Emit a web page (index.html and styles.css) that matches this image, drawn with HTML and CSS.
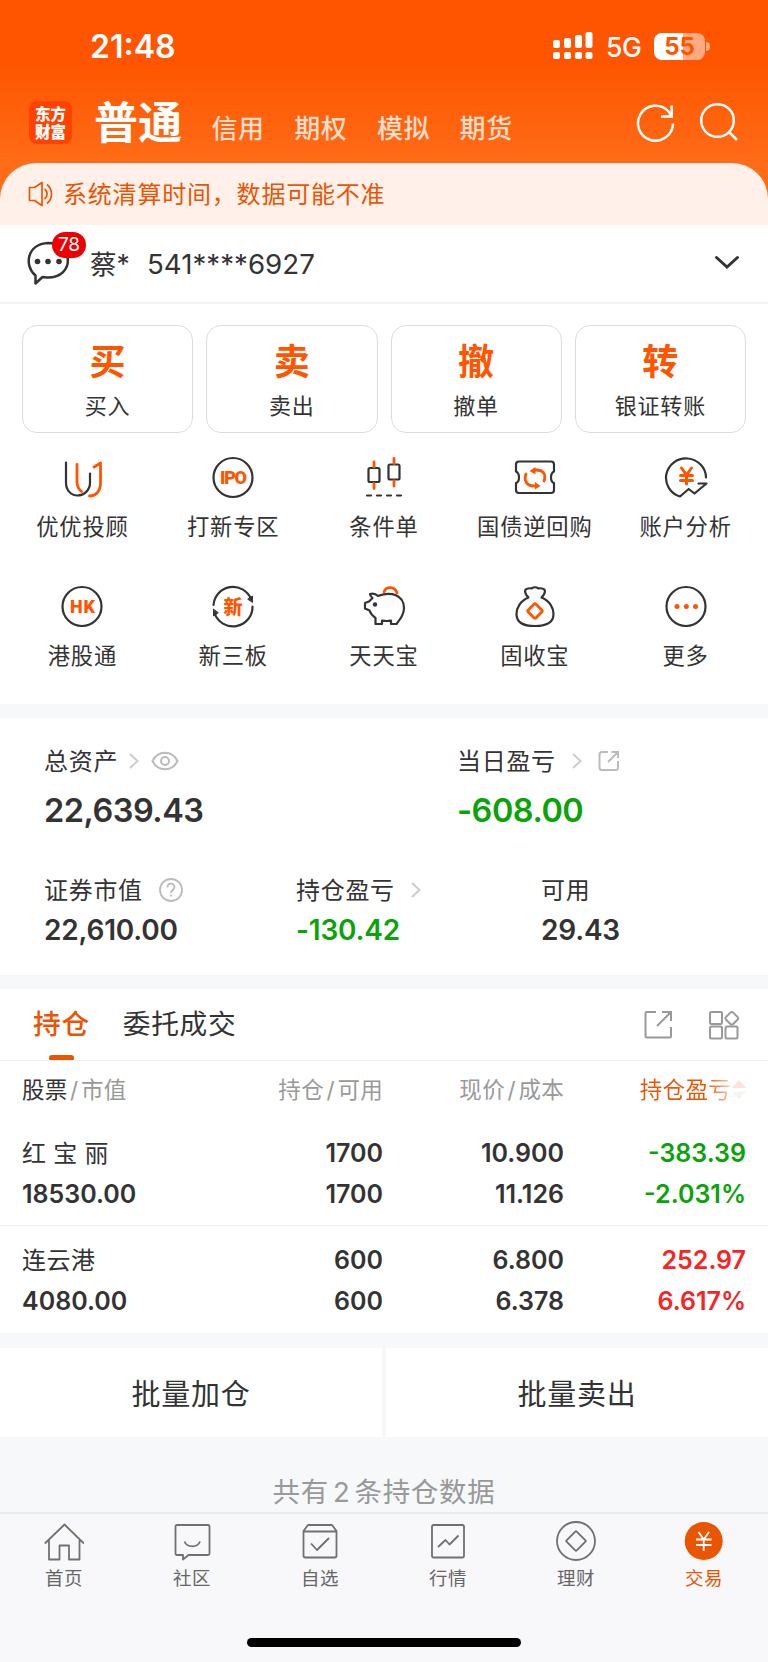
FILE: index.html
```html
<!DOCTYPE html>
<html lang="zh-CN">

<head>
    <meta charset="utf-8">
    <title>交易</title>
    <meta name="viewport" content="width=device-width, initial-scale=1.0">
    <link rel="stylesheet" href="styles.css">
</head>

<body>
    <header class="header">
        <div class="status-bar">
            <span class="time">21:48</span>
            <svg class="signal" width="40" height="28" viewBox="0 0 40 28" fill="#fff">
                <rect x="0" y="8" width="7" height="8" rx="2"/><rect x="11" y="6" width="7" height="10" rx="2"/>
                <rect x="22" y="3" width="7" height="13" rx="2"/><rect x="32.500" y="0" width="7" height="16" rx="2"/>
                <rect x="0" y="20" width="7" height="7" rx="2"/><rect x="11" y="20" width="7" height="7" rx="2"/>
                <rect x="22" y="20" width="7" height="7" rx="2"/><rect x="32.500" y="20" width="7" height="7" rx="2"/>
            </svg>
            <span class="network">5G</span>
            <div class="battery">55</div>
            <i class="battery-cap"></i>
        </div>
        <nav class="top-nav">
            <div class="logo"><span>东方</span><span>财富</span></div>
            <span class="mode active">普通</span>
            <span class="mode">信用</span>
            <span class="mode">期权</span>
            <span class="mode">模拟</span>
            <span class="mode">期货</span>
            <svg class="refresh" width="40" height="40" viewBox="0 0 40 40" fill="none" stroke="#fff" stroke-width="2.500">
                <path d="M37 20.500A17.500 17.500 0 1 1 32.500 8.500L35 12"/><path d="M35.700 2.500V13.500H25"/>
            </svg>
            <svg class="search" width="40" height="40" viewBox="0 0 40 40" fill="none" stroke="#fff" stroke-width="2.500">
                <circle cx="18.500" cy="17.500" r="16.300"/><path d="M30 29L38 37"/>
            </svg>
        </nav>
    </header>

    <div class="notice-wrap">
        <div class="notice">
            <svg width="26" height="26" viewBox="0 0 26 26" fill="none" stroke="#ea5504" stroke-width="1.700" stroke-linejoin="round">
                <path d="M1.500 6.500H6.500L14 1.500V24.500L6.500 19.500H1.500Z"/><path d="M16.500 8c3.500 2.500 3.500 7.500 0 10M19 3.500c6 5 6 14 0 19"/>
            </svg>
            <span>系统清算时间，数据可能不准</span>
        </div>
    </div>

    <div class="account">
        <div class="chat">
            <svg width="46" height="46" viewBox="0 0 46 46" fill="none" stroke="#333" stroke-width="2.500" stroke-linejoin="round">
                <path d="M9.500 43.500V35.500C-2 26 .500 4 22 3C48 3 49 37.500 22 37.500C19 37.500 18 37 16.500 37Z"/>
                <g fill="#333" stroke="none"><circle cx="11.500" cy="21.500" r="2.800"/><circle cx="22" cy="21.500" r="2.800"/><circle cx="33" cy="21.500" r="2.800"/></g>
            </svg>
            <b class="badge">78</b>
        </div>
        <span class="user">蔡*</span>
        <span class="number">541****6927</span>
        <svg class="arrow" width="26" height="16" viewBox="0 0 26 16" fill="none" stroke="#333" stroke-width="3" stroke-linecap="round"><path d="M2.500 2.500L13 12L23.500 2.500"/></svg>
    </div>

    <section class="trade">
        <div class="cards">
            <div class="card"><b>买</b><span>买入</span></div>
            <div class="card"><b>卖</b><span>卖出</span></div>
            <div class="card"><b>撤</b><span>撤单</span></div>
            <div class="card"><b>转</b><span>银证转账</span></div>
        </div>
        <div class="tools">
            <div class="tool">
                <svg viewBox="0 0 44 44">
                    <path d="M6 7.500V28C6 35 11 40.500 17.500 40.500S30 35 30 28V18.500"/>
                    <path class="o" d="M17 9.500V27C17 31 18.500 34 21.500 36.500M34 12L40.500 8V28C40.500 36 36 41 29.500 41"/>
                </svg>
                <span>优优投顾</span>
            </div>
            <div class="tool">
                <svg viewBox="0 0 44 44"><circle cx="22" cy="22.500" r="19.500"/><text x="22.500" y="29" font-size="18" textLength="27">IPO</text></svg>
                <span>打新专区</span>
            </div>
            <div class="tool">
                <svg viewBox="0 0 44 44">
                    <rect x="6.500" y="13" width="11" height="14" rx="1.500"/><rect x="26.500" y="9.500" width="11" height="15" rx="1.500"/>
                    <path d="M5 40.500h4M15 40.500h4M25 40.500h4M35 40.500h4"/>
                    <path class="o" d="M12 7v5M12 28.500v5M32 3.500v5M32 26v5"/>
                </svg>
                <span>条件单</span>
            </div>
            <div class="tool">
                <svg viewBox="0 0 44 44">
                    <path d="M6 6.500H38Q41 6.500 41 9.500V16.500C37 18.500 37 26.500 41 28V35Q41 38 38 38H6Q3 38 3 35V28C7 26.500 7 18.500 3 16.500V9.500Q3 6.500 6 6.500Z"/>
                    <path class="o" d="M13 19C10.500 26 14 31 21 31H23M31 26C33.500 19 30 15 23 15H21"/>
                    <path class="f" d="M16.500 16L22.500 12V19.500ZM27.500 31L22 27V34.500Z"/>
                </svg>
                <span>国债逆回购</span>
            </div>
            <div class="tool">
                <svg viewBox="0 0 44 44">
                    <path d="M42 22.500A20 19.500 0 1 0 16 41.500L24.700 34L30.500 38.500L42.500 28.500H34.500"/>
                    <path class="o y" d="M17.500 13L22.500 20L27.500 13M16.500 20.500H28.500M16.500 25.500H28.500M22.500 20V29"/>
                </svg>
                <span>账户分析</span>
            </div>
            <div class="tool">
                <svg viewBox="0 0 44 44"><circle cx="22" cy="22.500" r="19.500"/><text x="22.500" y="29" font-size="18" textLength="25">HK</text></svg>
                <span>港股通</span>
            </div>
            <div class="tool">
                <svg viewBox="0 0 44 44">
                    <path d="M2.500 21A19.500 19.500 0 0 1 40 15M41.500 22.500A19.500 19.500 0 0 1 3.500 29"/>
                    <path fill="#333" stroke-width="1" d="M37 15L41.500 12V18ZM2.500 25.500V32L7 29Z"/>
                    <text class="cn" x="22" y="29.500" font-size="19">新</text>
                </svg>
                <span>新三板</span>
            </div>
            <div class="tool">
                <svg viewBox="0 0 44 44">
                    <path d="M8 10C11 9 14 10 16 12C29 7 42 11 42 24C42 30 39 34 34.500 40H29V36.500Q25 37.500 20 36.500V40H13.500V34Q9 31 7.500 26.500L3 24.500V19L7 17.500L10.500 14Q8 12 8 10Z"/>
                    <circle cx="13" cy="20.500" r="2.200" fill="#333" stroke="none"/>
                    <path class="o" d="M22 8C24 2 33 2 35 9"/>
                </svg>
                <span>天天宝</span>
            </div>
            <div class="tool">
                <svg viewBox="0 0 44 44">
                    <path d="M15.500 13.500C11 9 11 5 15 4.500Q17 4 18.500 4.500Q22 2 25.500 4.500Q27 4 29 4.500C33 5 33 9 28.500 13.500C37 17 40.500 24 40.500 30C40.500 38 35 42 22 42S3.500 38 3.500 30C3.500 24 7 17 15.500 13.500Z"/>
                    <rect class="o" x="16.500" y="21.500" width="11" height="11" rx="1.500" transform="rotate(45 22 27)"/>
                </svg>
                <span>固收宝</span>
            </div>
            <div class="tool">
                <svg viewBox="0 0 44 44"><circle cx="22" cy="22.500" r="19.500"/><g class="f"><circle cx="13" cy="22.500" r="2.500"/><circle cx="22.300" cy="22.500" r="2.500"/><circle cx="31.500" cy="22.500" r="2.500"/></g></svg>
                <span>更多</span>
            </div>
        </div>
    </section>

    <section class="assets">
        <div class="total">
            <div class="asset">
                <div class="label"><span>总资产</span>
                    <svg class="chev" width="10" height="16" viewBox="0 0 10 16"><path d="M1 1L8.500 8L1 15"/></svg>
                    <svg class="eye" width="28" height="20" viewBox="0 0 28 20"><path d="M1.500 10C7 -1 21 -1 26.500 10C21 21 7 21 1.500 10Z"/><circle cx="14" cy="10" r="4"/></svg>
                </div>
                <div class="value">22,639.43</div>
            </div>
            <div class="asset">
                <div class="label"><span>当日盈亏</span>
                    <svg class="chev wide" width="10" height="16" viewBox="0 0 10 16"><path d="M1 1L8.500 8L1 15"/></svg>
                    <svg class="share" width="22" height="22" viewBox="0 0 22 22"><path d="M10 2H4Q1.500 2 1.500 4.500V17.500Q1.500 20 4 20H17.500Q20 20 20 17.500V11M13.500 2H20V8M20 2L10 12"/></svg>
                </div>
                <div class="value green">-608.00</div>
            </div>
        </div>
        <div class="detail">
            <div class="asset">
                <div class="label"><span>证券市值</span>
                    <svg class="help" width="24" height="24" viewBox="0 0 24 24"><circle cx="12" cy="12" r="11"/><path d="M8.500 9.500C8.500 4.500 15.500 4.500 15.500 9C15.500 12 12 12 12 15M12 16.500V18.500"/></svg>
                </div>
                <div class="value">22,610.00</div>
            </div>
            <div class="asset">
                <div class="label"><span>持仓盈亏</span>
                    <svg class="chev wide" width="10" height="16" viewBox="0 0 10 16"><path d="M1 1L8.500 8L1 15"/></svg>
                </div>
                <div class="value green">-130.42</div>
            </div>
            <div class="asset">
                <div class="label"><span>可用</span></div>
                <div class="value">29.43</div>
            </div>
        </div>
    </section>

    <section class="holdings">
        <div class="tabs">
            <span class="tab active">持仓</span>
            <span class="tab">委托成交</span>
            <svg class="export" width="30" height="30" viewBox="0 0 30 30"><path d="M12 2H2.500Q1.500 2 1.500 3V26.500Q1.500 27.500 2.500 27.500H26Q27 27.500 27 26.500V17M18 2H27V11M27 2L13 16"/></svg>
            <svg class="layout" width="32" height="30" viewBox="0 0 32 30"><rect x="2" y="2" width="12" height="12" rx="1.500"/><rect x="2" y="16.500" width="12" height="12" rx="1.500"/><rect x="17.500" y="16.500" width="12" height="12" rx="1.500"/><rect x="18.800" y="3.300" width="10" height="10" rx="2" transform="rotate(45 23.800 8.300)"/></svg>
        </div>
        <div class="row head">
            <span><em>股票</em><i>/</i>市值</span>
            <span>持仓<i>/</i>可用</span>
            <span>现价<i>/</i>成本</span>
            <span class="sort">持仓盈亏<svg width="14" height="20" viewBox="0 0 14 20"><path fill="#fde3d6" d="M7 0L14 8H0Z"/><path fill="#f5f5f6" d="M0 11.500H14L7 19.500Z"/></svg></span>
        </div>
        <div class="row">
            <div><span class="name spaced">红 宝 丽</span><span>18530.00</span></div>
            <div><span>1700</span><span>1700</span></div>
            <div><span>10.900</span><span>11.126</span></div>
            <div class="green"><span>-383.39</span><span>-2.031%</span></div>
        </div>
        <div class="row">
            <div><span class="name">连云港</span><span>4080.00</span></div>
            <div><span>600</span><span>600</span></div>
            <div><span>6.800</span><span>6.378</span></div>
            <div class="red"><span>252.97</span><span>6.617%</span></div>
        </div>
    </section>

    <div class="batch">
        <div>批量加仓</div>
        <div>批量卖出</div>
    </div>
    <div class="count">共有<i>2</i>条持仓数据</div>

    <footer class="tabbar">
        <div class="items">
            <div class="item">
                <svg viewBox="0 0 40 40"><path d="M.800 22.500L20.500 3.500L40 22.500M5 19V38.500H15.500V24.500H25V38.500H35.500V19"/></svg>
                <span>首页</span>
            </div>
            <div class="item">
                <svg viewBox="0 0 40 40"><path d="M5 4H36Q37.500 4 37.500 5.500V32.500Q37.500 34 36 34H16.500L11 38.500V34H5Q3.500 34 3.500 32.500V5.500Q3.500 4 5 4ZM12.500 20.500C15 27 25.500 27 28 20.500"/></svg>
                <span>社区</span>
            </div>
            <div class="item">
                <svg viewBox="0 0 40 40"><path d="M8 4H32L36.500 10V34.500Q36.500 36.500 34.500 36.500H5.500Q3.500 36.500 3.500 34.500V10ZM3.500 10.500H36.500M11 22.500L17 29L29 17"/></svg>
                <span>自选</span>
            </div>
            <div class="item">
                <svg viewBox="0 0 40 40"><rect x="4" y="4" width="32" height="32.500" rx="1.500"/><path d="M10 26L17.500 19L21.500 23.500L30.500 14.500"/></svg>
                <span>行情</span>
            </div>
            <div class="item">
                <svg viewBox="0 0 40 40"><circle cx="20" cy="20" r="19"/><rect x="12.800" y="12.800" width="14.400" height="14.400" rx="1" transform="rotate(45 20 20)"/></svg>
                <span>理财</span>
            </div>
            <div class="item active">
                <svg viewBox="0 0 40 40"><circle cx="19.700" cy="20" r="19" fill="#ea5504" stroke="none"/><path stroke="#fff" d="M14.500 11L19.700 18.500L25 11M12 18.500H27.500M12 24H27.500M19.700 18.500V30"/></svg>
                <span>交易</span>
            </div>
        </div>
        <div class="home-bar"></div>
    </footer>
</body>

</html>
```

FILE: styles.css
```css
* {
    box-sizing: border-box;
}

body {
    margin: 0;
    width: 768px;
    height: 1662px;
    overflow: hidden;
    background: #f6f8fa;
    color: #333;
    font-family: Inter, "Noto Sans CJK SC", sans-serif;
}

svg {
    display: block;
    flex: none;
}

i, em {
    font-style: normal;
}

.green {
    color: #0aa30a;
}
.red {
    color: #f82323;
}

/* header */
.header {
    height: 163px;
    background: linear-gradient(#ff5500 0, #ff5500 65px, #ff6c17 163px);
    color: #fff;
}
.status-bar {
    display: flex;
    align-items: center;
    height: 92px;
    padding-left: 90px;
}
.time {
    width: 463px;
    font-size: 32px;
    font-weight: 600;
}
.network {
    width: 48px;
    margin-left: 13px;
    padding-top: 2px;
    font-size: 26.500px;
    font-weight: 500;
    letter-spacing: -0.5px;
}
.battery {
    width: 51px;
    height: 27px;
    border-radius: 8px;
    background: linear-gradient(90deg, #fff 56%, #ffaa80 56%);
    color: #ff5500;
    font-size: 24px;
    font-weight: 700;
    line-height: 27px;
    text-align: center;
}
.battery-cap {
    width: 4px;
    height: 9px;
    margin-left: 1px;
    border-radius: 0 4px 4px 0;
    background: #ffaa80;
}

.top-nav {
    display: flex;
    align-items: center;
    height: 61px;
    padding-left: 29px;
}
.logo {
    width: 43px;
    height: 43px;
    padding-top: 3px;
    border-radius: 8px;
    background: #ff4200;
    font-family: "Noto Sans CJK SC", sans-serif;
    font-size: 15.500px;
    font-weight: 900;
    line-height: 18px;
    text-align: center;
}
.logo span {
    display: block;
}
.mode {
    margin: 13px 0 0 29.500px;
    color: #ffddcb;
    font-size: 26px;
    font-weight: 500;
    line-height: 30px;
    letter-spacing: 0.6px;
}
.mode.active {
    margin: 0 0 0 22px;
    color: #fff;
    font-size: 44px;
    font-weight: 700;
    letter-spacing: 0;
}
.refresh {
    margin-left: 123px;
}
.search {
    margin-left: 23px;
}

/* notice */
.notice-wrap {
    height: 62px;
    background: #ff6c17;
}
.notice {
    display: flex;
    align-items: center;
    height: 62px;
    padding-left: 28px;
    border-radius: 36px 36px 0 0;
    background: #fff1ea;
    color: #ea5504;
    font-size: 24px;
    letter-spacing: 0.8px;
}
.notice span {
    margin-left: 9px;
    padding-bottom: 3px;
}

/* account */
.account {
    display: flex;
    align-items: center;
    height: 79px;
    padding: 0 28px 2px 26px;
    border-bottom: 2px solid #f2f2f3;
    background: #fff;
    font-size: 27.700px;
}
.chat {
    position: relative;
    width: 64px;
}
.badge {
    position: absolute;
    top: -8px;
    left: 26px;
    width: 34px;
    height: 26px;
    border-radius: 13px;
    background: #ee0000;
    color: #fff;
    font-size: 19px;
    font-weight: 400;
    line-height: 26px;
    text-align: center;
}
.user {
    width: 57px;
    font-size: 26.500px;
}
.number {
    padding-top: 3px;
}
.arrow {
    margin-left: auto;
}

/* trade */
.trade {
    height: 400px;
    padding-top: 21px;
    background: #fff;
}
.cards {
    display: flex;
    gap: 13px;
    padding: 0 22px;
}
.card {
    flex: 1;
    height: 108px;
    padding-top: 15px;
    border: 1px solid #dcdcdc;
    border-radius: 15px;
    text-align: center;
}
.card b {
    display: block;
    color: #ff5500;
    font-size: 36px;
    font-weight: 700;
    line-height: 42px;
}
.card span {
    display: block;
    margin-top: 6px;
    font-size: 22px;
    line-height: 34px;
    letter-spacing: 0.8px;
}
.tools {
    display: grid;
    grid-template-columns: repeat(5, 1fr);
    row-gap: 42px;
    padding: 22px 7px 0;
}
.tool {
    display: flex;
    flex-direction: column;
    align-items: center;
}
.tool svg {
    width: 44px;
    height: 44px;
    margin-bottom: 13px;
    fill: none;
    stroke: #333;
    stroke-width: 2.2;
    stroke-linecap: round;
    stroke-linejoin: round;
}
.tool .o {
    stroke: #ff5500;
    stroke-width: 2.8;
}
.tool .y {
    stroke-width: 3;
}
.tool .f {
    fill: #ff5500;
    stroke: none;
}
.tool text {
    fill: #ff5500;
    stroke: none;
    font-family: Roboto, sans-serif;
    font-weight: 900;
    text-anchor: middle;
}
.tool .cn {
    font-family: "Noto Sans CJK SC", sans-serif;
}
.tool span {
    font-size: 22.300px;
    line-height: 30px;
    letter-spacing: 0.8px;
}

/* assets */
.assets {
    height: 257px;
    margin-top: 14px;
    padding: 25px 44px 0;
    background: #fff;
}
.total, .detail {
    display: grid;
    grid-template-columns: 413px 1fr;
}
.detail {
    grid-template-columns: 252px 245px 1fr;
    margin-top: 40px;
}
.label {
    display: flex;
    align-items: center;
    height: 36px;
    font-size: 24px;
    letter-spacing: 0.7px;
}
.label span {
    padding-bottom: 3px;
}
.label svg {
    fill: none;
    stroke: #bbb;
    stroke-width: 2;
}
.label .chev {
    margin-left: 11px;
    stroke: #ccc;
}
.label .wide {
    margin-left: 16px;
}
.label .eye {
    margin-left: 12px;
}
.label .share {
    margin-left: 16px;
}
.label .help {
    margin-left: 16px;
    stroke-width: 1.8;
}
.value {
    margin-top: 11px;
    font-size: 32.500px;
    font-weight: 600;
    line-height: 42px;
    letter-spacing: -0.5px;
}
.detail .value {
    margin-top: 4px;
    font-size: 28px;
    line-height: 36px;
    letter-spacing: -0.2px;
}

/* holdings */
.holdings {
    height: 344px;
    margin-top: 14px;
    background: #fff;
}
.tabs {
    display: flex;
    align-items: center;
    height: 72px;
    padding: 0 28px 0 33px;
    border-bottom: 1px solid #f1f1f2;
    font-size: 27.700px;
    letter-spacing: 0.7px;
}
.tabs svg {
    fill: none;
    stroke: #999;
    stroke-width: 2;
}
.tab {
    position: relative;
    margin-right: 33px;
    line-height: 71px;
}
.tab.active {
    color: #ea5504;
    font-weight: 500;
}
.tab.active::after {
    content: "";
    position: absolute;
    left: 16px;
    bottom: 0;
    width: 25px;
    height: 5px;
    border-radius: 3px 3px 1px 1px;
    background: #ea5504;
}
.export {
    margin-left: auto;
}
.layout {
    margin-left: 34px;
}
.row {
    display: grid;
    grid-template-columns: 160px 201px 181px 182px;
    height: 107px;
    padding: 15px 22px 0;
    font-size: 25px;
    font-weight: 600;
    text-align: right;
}
.row + .row:last-child {
    padding-top: 14px;
    border-top: 1px solid #f1f1f2;
}
.row > :first-child {
    text-align: left;
}
.row div > span {
    display: block;
    line-height: 41px;
}
.row .name {
    padding-top: 1px;
    line-height: 40px;
    font-size: 24px;
    font-weight: 400;
    letter-spacing: 0.5px;
}
.row .spaced {
    word-spacing: -0.5px;
}
.row.head {
    height: 57px;
    padding-top: 0;
    color: #999;
    font-size: 22.500px;
    font-weight: 400;
    line-height: 57px;
    letter-spacing: 0.3px;
}
.head em {
    color: #333;
}
.head i {
    margin: 0 2.500px;
}
.sort {
    display: flex;
    align-items: center;
    justify-content: flex-end;
    gap: 1px;
    background: linear-gradient(90deg, #ea5504 78%, #fbd5c0 93%);
    background-clip: text;
    -webkit-background-clip: text;
    color: transparent;
}

/* batch buttons */
.batch {
    display: flex;
    gap: 4px;
    margin-top: 15px;
}
.batch div {
    flex: 1;
    height: 89px;
    padding-top: 2px;
    background: #fff;
    font-size: 29px;
    line-height: 89px;
    letter-spacing: 0.8px;
    text-align: center;
}
.count {
    height: 75px;
    padding-top: 35px;
    color: #999;
    font-size: 27.500px;
    line-height: 40px;
    letter-spacing: 0.7px;
    text-align: center;
}
.count i {
    margin: 0 4px;
}

/* bottom bar */
.tabbar {
    height: 150px;
    border-top: 2px solid #ebebed;
    background: #f8f8fb;
}
.items {
    display: flex;
    height: 124px;
    padding-top: 7px;
}
.item {
    flex: 1;
    display: flex;
    flex-direction: column;
    align-items: center;
    color: #666;
    font-size: 18.500px;
    line-height: 26px;
    letter-spacing: 0.5px;
}
.item svg {
    width: 40px;
    height: 40px;
    margin-bottom: 4px;
    fill: none;
    stroke: #707070;
    stroke-width: 1.8;
    stroke-linejoin: round;
}
.item.active {
    color: #ea5504;
}
.home-bar {
    width: 274px;
    height: 9px;
    margin: 0 auto;
    border-radius: 5px;
    background: #000;
}
```
